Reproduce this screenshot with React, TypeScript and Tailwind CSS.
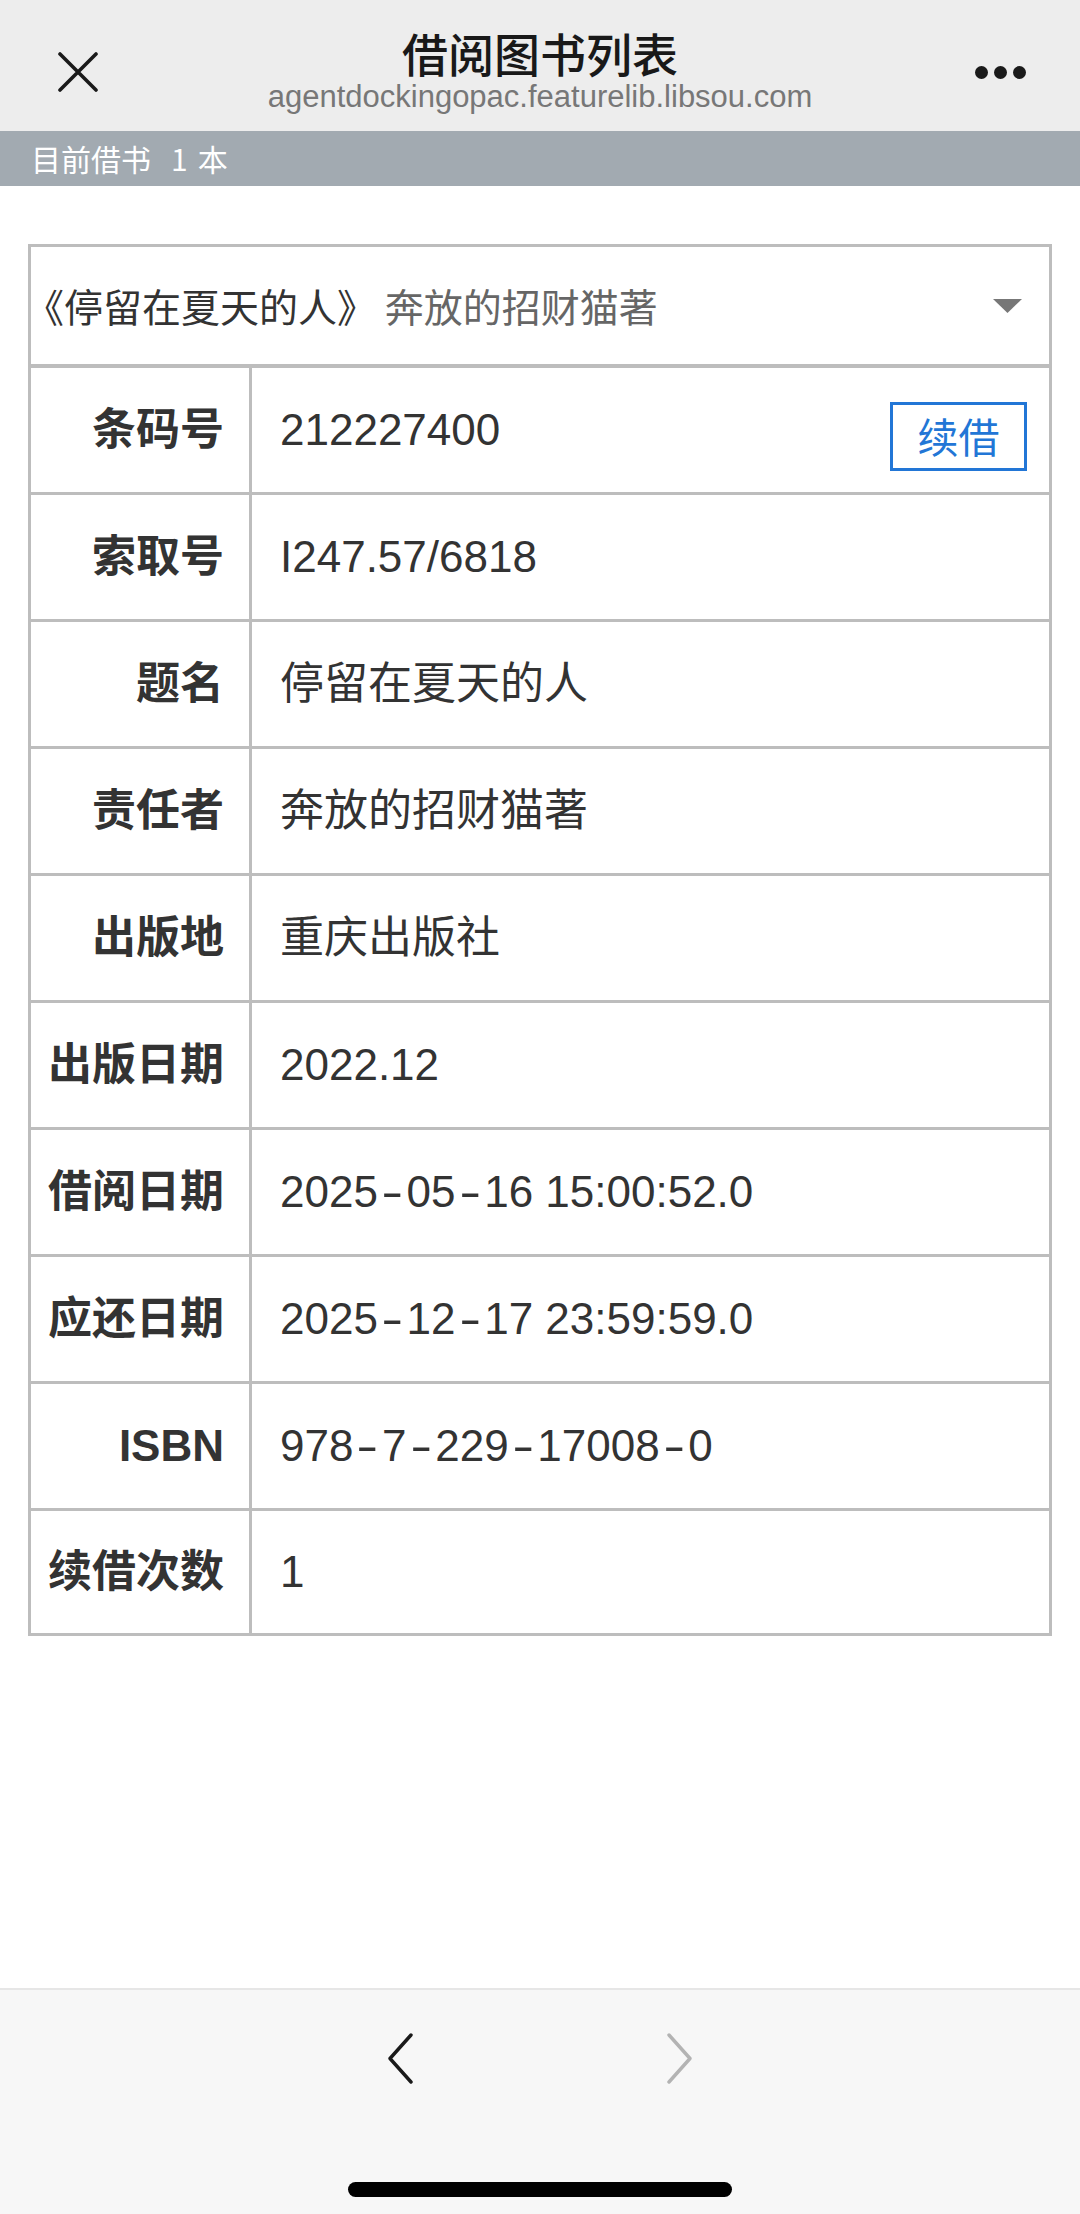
import React from 'react';

const rows: { label: string; value: string; action?: string }[] = [
  { label: '条码号', value: '212227400', action: '续借' },
  { label: '索取号', value: 'I247.57/6818' },
  { label: '题名', value: '停留在夏天的人' },
  { label: '责任者', value: '奔放的招财猫著' },
  { label: '出版地', value: '重庆出版社' },
  { label: '出版日期', value: '2022.12' },
  { label: '借阅日期', value: '2025-05-16 15:00:52.0' },
  { label: '应还日期', value: '2025-12-17 23:59:59.0' },
  { label: 'ISBN', value: '978-7-229-17008-0' },
  { label: '续借次数', value: '1' },
];

const font = "font-['Liberation_Sans','Noto_Sans_CJK_SC',sans-serif]";

// hyphens in the reference are drawn wide, so give them some room
function Value({ text }: { text: string }) {
  const parts = text.split('-');
  return (
    <span className="text-[44px] text-[#333333]">
      {parts.map((p, i) => (
        <React.Fragment key={i}>
          {i > 0 && <span className="inline-block px-[7px] scale-x-[1.5]">-</span>}
          {p}
        </React.Fragment>
      ))}
    </span>
  );
}

export default function App() {
  return (
    <div className={`w-full h-[2214px] flex flex-col bg-white ${font}`}>
      {/* nav bar */}
      <div className="flex h-[131px] bg-[#ededed] shrink-0">
        <div className="w-[140px] flex items-center pl-[58px] pt-[13px]">
          <svg width="40" height="40" viewBox="0 0 40 40">
            <path d="M2 2 L38 38 M38 2 L2 38" stroke="#1a1a1a" strokeWidth="3.6" strokeLinecap="round" />
          </svg>
        </div>
        <div className="flex-1 flex flex-col items-center pt-[27px]">
          <div className="text-[46px] leading-[50px] font-medium text-[#191919] font-['Noto_Sans_CJK_SC',sans-serif]">
            借阅图书列表
          </div>
          <div className="text-[31px] leading-[40px] text-[#777777] font-['Liberation_Sans',sans-serif]">
            agentdockingopac.featurelib.libsou.com
          </div>
        </div>
        <div className="w-[140px] flex items-center justify-end pr-[54px] pt-[13px] gap-[6px]">
          <span className="w-[13px] h-[13px] rounded-full bg-[#1a1a1a]" />
          <span className="w-[13px] h-[13px] rounded-full bg-[#1a1a1a]" />
          <span className="w-[13px] h-[13px] rounded-full bg-[#1a1a1a]" />
        </div>
      </div>

      {/* count bar */}
      <div className="h-[55px] bg-[#a2aab1] flex items-center pl-[31px] shrink-0">
        <span className="text-[30px] text-white font-['Noto_Sans_CJK_SC',sans-serif]">
          目前借书<span className="ml-[20px]">1</span>
          <span className="ml-[10px]">本</span>
        </span>
      </div>

      {/* content */}
      <div className="flex-1 pt-[58px] px-[28px]">
        <div className="border-[3px] border-[#bdbdbd]">
          <div className="h-[121px] flex items-center justify-between pr-[27px] border-b-[4px] border-[#bdbdbd]">
            <span className="text-[39px] -ml-[6px] font-['Noto_Sans_CJK_SC',sans-serif]">
              <span className="text-[#333333]">《停留在夏天的人》</span>
              <span className="text-[#666666]"> 奔放的招财猫著</span>
            </span>
            <svg width="29" height="14" viewBox="0 0 29 14">
              <polygon points="0,0 29,0 14.5,14" fill="#777777" />
            </svg>
          </div>
          {rows.map((r, i) => (
            <div
              key={r.label}
              className={`flex ${i < rows.length - 1 ? 'h-[127px] border-b-[3px] border-[#bdbdbd]' : 'h-[122px]'}`}
            >
              <div className="w-[221px] shrink-0 border-r-[3px] border-[#bdbdbd] flex items-center justify-end pr-[25px]">
                <span className="text-[44px] font-bold text-[#333333]">{r.label}</span>
              </div>
              <div className="flex-1 flex items-center justify-between pl-[28px] pr-[22px]">
                <Value text={r.value} />
                {r.action && (
                  <button className="w-[137px] h-[69px] mt-[12px] border-[3px] border-[#2276d6] text-[#2276d6] text-[41px] flex items-center justify-center font-['Noto_Sans_CJK_SC',sans-serif]">
                    {r.action}
                  </button>
                )}
              </div>
            </div>
          ))}
        </div>
      </div>

      {/* bottom toolbar */}
      <div className="h-[226px] shrink-0 bg-[#f7f7f7] border-t-2 border-[#e6e6e6] flex flex-col items-center">
        <div className="flex items-center gap-[254px] mt-[43px]">
          <svg width="26" height="51" viewBox="0 0 26 51">
            <polyline points="24,2 3,25.5 24,49" fill="none" stroke="#1a1a1a" strokeWidth="3.4" strokeLinecap="round" strokeLinejoin="round" />
          </svg>
          <svg width="26" height="51" viewBox="0 0 26 51">
            <polyline points="2,2 23,25.5 2,49" fill="none" stroke="#b3b3b3" strokeWidth="3.4" strokeLinecap="round" strokeLinejoin="round" />
          </svg>
        </div>
        <div className="mt-auto mb-[17px] w-[384px] h-[15px] rounded-full bg-black" />
      </div>
    </div>
  );
}
